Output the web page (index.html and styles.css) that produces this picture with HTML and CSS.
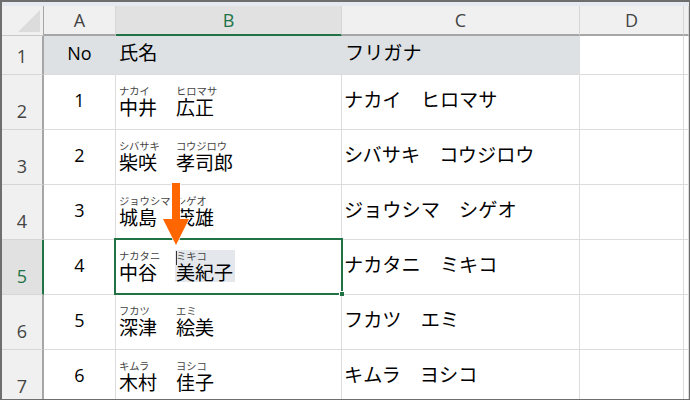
FILE: index.html
```html
<!DOCTYPE html>
<html lang="ja">
<head>
<meta charset="utf-8">
<title>氏名とフリガナ</title>
<link rel="stylesheet" href="styles.css">
</head>
<body>
<div class="sheet">
  <div class="strip"></div>
  <div class="grid">
    <div class="corner"><svg class="tri" width="22" height="22" viewBox="0 0 22 22"><path d="M22 0V22H0Z" fill="#dcdcdc"/></svg></div>
    <div class="ch">A</div><div class="ch active">B</div><div class="ch">C</div><div class="ch">D</div><div class="ch"></div>

    <div class="rh">1</div>
    <div class="c head center">No</div><div class="c head">氏名</div><div class="c head">フリガナ</div><div class="c"></div><div class="c"></div>

    <div class="rh">2</div>
    <div class="c center">1</div>
    <div class="c name"><span class="part"><span class="furi">ナカイ</span><span class="kanji">中井</span></span><span class="part"><span class="furi">ヒロマサ</span><span class="kanji">広正</span></span></div>
    <div class="c">ナカイ　ヒロマサ</div><div class="c"></div><div class="c"></div>

    <div class="rh">3</div>
    <div class="c center">2</div>
    <div class="c name"><span class="part"><span class="furi">シバサキ</span><span class="kanji">柴咲</span></span><span class="part"><span class="furi">コウジロウ</span><span class="kanji">孝司郎</span></span></div>
    <div class="c">シバサキ　コウジロウ</div><div class="c"></div><div class="c"></div>

    <div class="rh">4</div>
    <div class="c center">3</div>
    <div class="c name"><span class="part"><span class="furi">ジョウシマ</span><span class="kanji">城島</span></span><span class="part"><span class="furi">シゲオ</span><span class="kanji">茂雄</span></span></div>
    <div class="c">ジョウシマ　シゲオ</div><div class="c"></div><div class="c"></div>

    <div class="rh active">5</div>
    <div class="c center">4</div>
    <div class="c name"><span class="part"><span class="furi">ナカタニ</span><span class="kanji">中谷</span></span><span class="part marked"><span class="caret"></span><span class="furi">ミキコ</span><span class="kanji">美紀子</span></span></div>
    <div class="c">ナカタニ　ミキコ</div><div class="c"></div><div class="c"></div>

    <div class="rh">6</div>
    <div class="c center">5</div>
    <div class="c name"><span class="part"><span class="furi">フカツ</span><span class="kanji">深津</span></span><span class="part"><span class="furi">エミ</span><span class="kanji">絵美</span></span></div>
    <div class="c">フカツ　エミ</div><div class="c"></div><div class="c"></div>

    <div class="rh">7</div>
    <div class="c center">6</div>
    <div class="c name"><span class="part"><span class="furi">キムラ</span><span class="kanji">木村</span></span><span class="part"><span class="furi">ヨシコ</span><span class="kanji">佳子</span></span></div>
    <div class="c">キムラ　ヨシコ</div><div class="c"></div><div class="c"></div>
  </div>
  <div class="selection"><span class="handle"></span></div>
  <svg class="arrow" width="30" height="66" viewBox="0 0 30 66"><path d="M11 1H19V37H28L15 63L2 37H11Z" fill="#ff6600" stroke="#fff" stroke-width="1.5" paint-order="stroke"/></svg>
</div>
</body>
</html>
```

FILE: styles.css
```css
html, body {
  margin: 0;
  padding: 0;
  background: #fff;
}
.sheet {
  position: relative;
  box-sizing: border-box;
  width: 690px;
  height: 400px;
  border: 1px solid #6e6e6e;
  border-width: 2px 1px 1px 2px;
  overflow: hidden;
  font-family: "Noto Sans CJK JP", "Open Sans", sans-serif;
  background: #fff;
}
.strip {
  height: 4px;
  background: #e6e9ef;
}
.grid {
  display: grid;
  grid-template-columns: 42px 72px 226px 238px 104px 5px;
  grid-template-rows: 30px 39px 55px 55px 55px 55px 55px 55px;
}
.corner {
  position: relative;
  background: #f0f0f0;
  border-right: 1px solid #a6a6a6;
  border-bottom: 1px solid #c8c8c8;
  box-sizing: border-box;
}
.tri {
  position: absolute;
  left: 16px;
  top: 4px;
}
.ch {
  box-sizing: border-box;
  background: #f0f0f0;
  border-right: 1px solid #d6d6d6;
  border-bottom: 2px solid #a6a6a6;
  display: flex;
  align-items: center;
  justify-content: center;
  font: 18px/1 "Open Sans", sans-serif;
  color: #444;
}
.ch.active {
  background: #e1e1e1;
  color: #217346;
  border-bottom-color: #217346;
}
.rh {
  box-sizing: border-box;
  background: #f0f0f0;
  border-right: 2px solid #a6a6a6;
  border-bottom: 1px solid #d6d6d6;
  display: flex;
  align-items: flex-end;
  justify-content: center;
  padding-bottom: 6px;
  font: 18px/1.2 "Open Sans", sans-serif;
  color: #444;
}
.rh.active {
  background: #e1e1e1;
  color: #217346;
  border-right-color: #217346;
}
.c {
  box-sizing: border-box;
  border-right: 1px solid #dcdcdc;
  border-bottom: 1px solid #dcdcdc;
  display: flex;
  align-items: center;
  padding-left: 2px;
  padding-bottom: 5px;
  font-size: 19.2px;
  line-height: 1.2;
  color: #000;
  white-space: nowrap;
}
.head {
  background: #dee1e4;
  border-right-color: #dee1e4;
  border-bottom-color: #dcdcdc;
  padding-left: 3px;
}
.center {
  justify-content: center;
  padding-left: 0;
  padding-bottom: 2px;
  font-family: "Open Sans", sans-serif;
  font-size: 18px;
}
.name {
  gap: 19px;
  padding-left: 3px;
  padding-bottom: 4px;
}
.part {
  position: relative;
  display: flex;
  flex-direction: column;
}
.furi {
  width: 0;
  padding-top: 1px;
  margin-bottom: -1px;
  font-size: 10.3px;
  line-height: 13px;
  color: #444;
  white-space: nowrap;
}
.kanji {
  font-size: 19px;
  line-height: 21px;
}
.marked::before {
  content: "";
  position: absolute;
  left: -1px;
  right: -2px;
  top: 2px;
  bottom: 0;
  background: #e4e8ec;
  z-index: -1;
}
.part.marked {
  z-index: 0;
}
.caret {
  position: absolute;
  left: 0;
  top: 3px;
  width: 1px;
  height: 14px;
  background: #333;
}
.selection {
  position: absolute;
  left: 112px;
  top: 236px;
  width: 229px;
  height: 57px;
  box-sizing: border-box;
  border: 2px solid #217346;
}
.handle {
  position: absolute;
  right: -3px;
  bottom: -3px;
  width: 4px;
  height: 4px;
  background: #217346;
  border: 1px solid #fff;
  border-width: 1px 0 0 1px;
}
.arrow {
  position: absolute;
  left: 159px;
  top: 180px;
}
```
